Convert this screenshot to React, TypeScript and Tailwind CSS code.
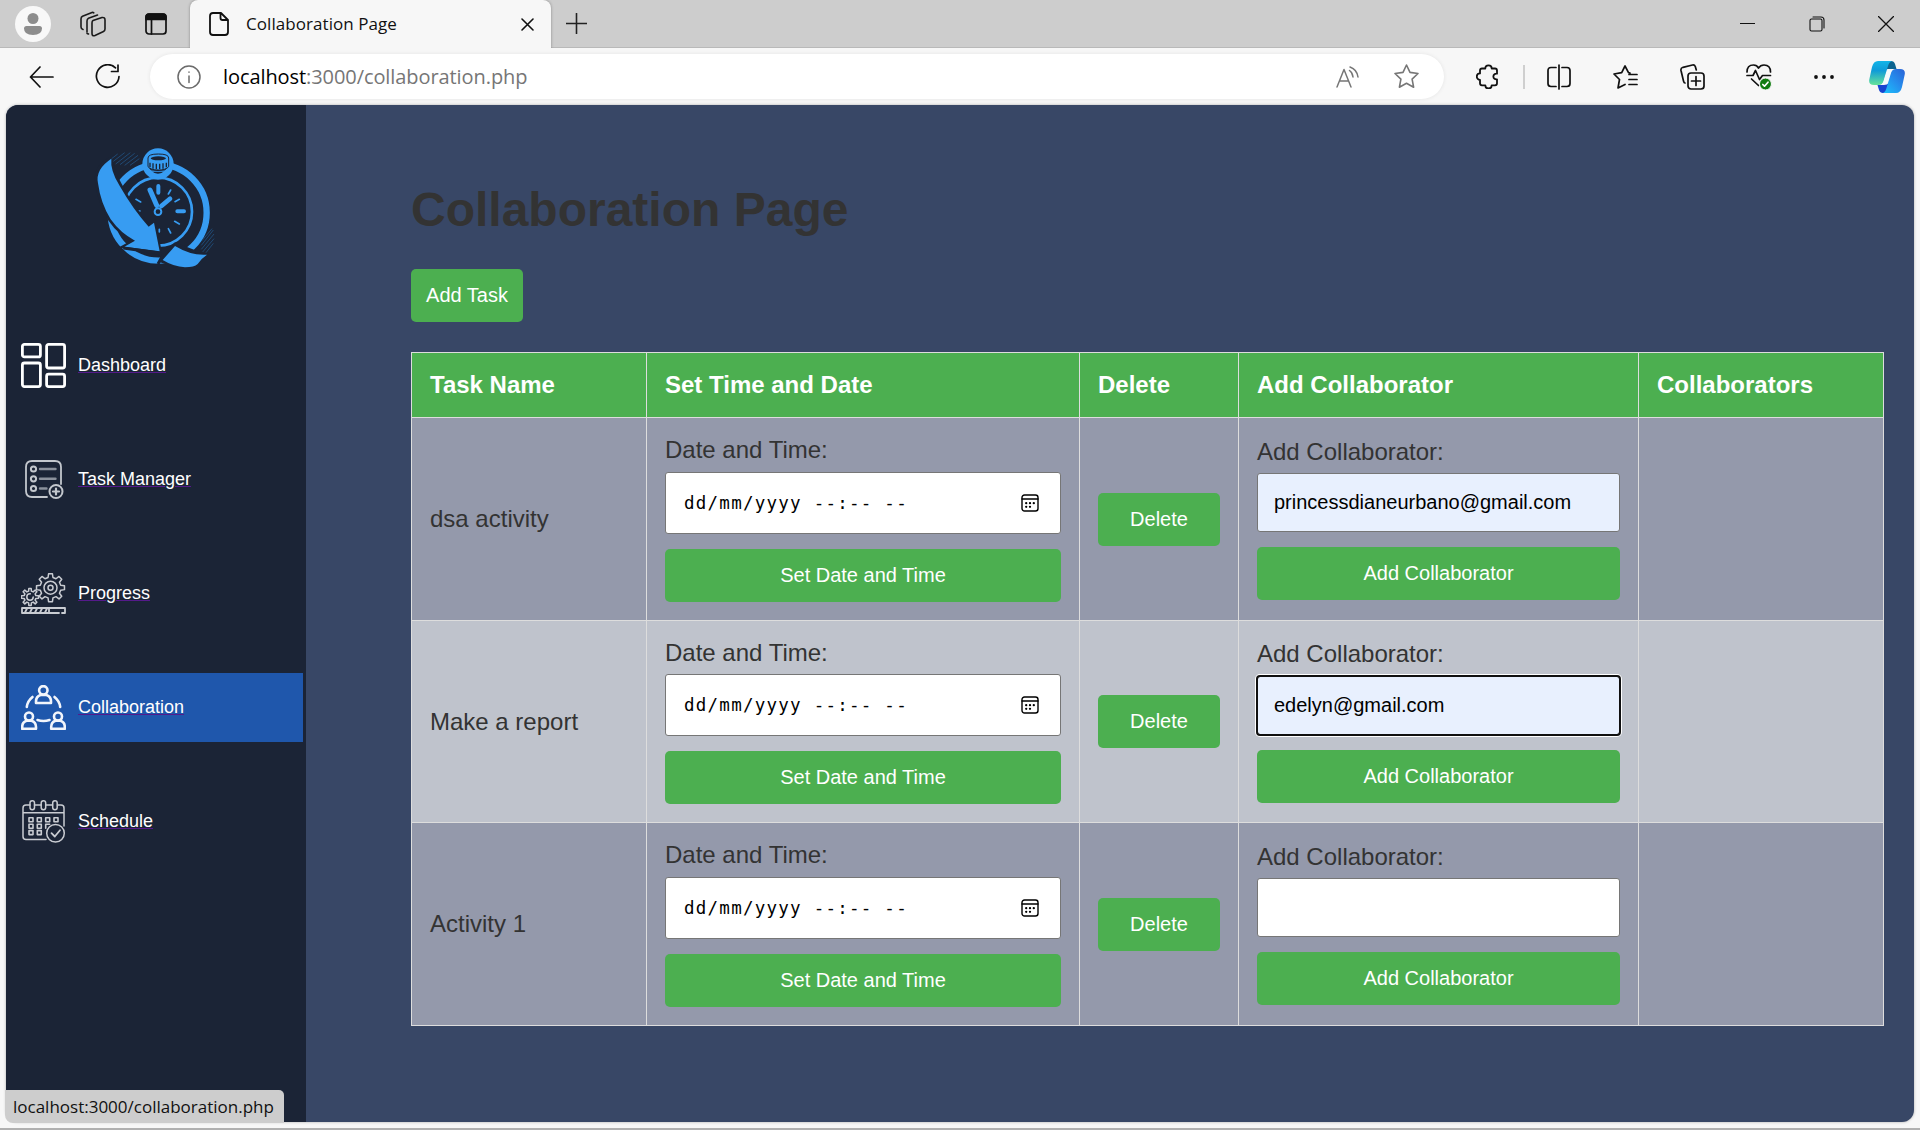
import React from "react";

const ui = "font-['Open_Sans','Noto_Sans',sans-serif]";

function Svg({ w, h, vb, cls = "", sw = 1.5, children }: { w: number; h: number; vb?: string; cls?: string; sw?: number; children: React.ReactNode }) {
  return (
    <svg width={w} height={h} viewBox={vb ?? `0 0 ${w} ${h}`} className={`block shrink-0 ${cls}`} fill="none" stroke="currentColor" strokeWidth={sw} strokeLinecap="round" strokeLinejoin="round">
      {children}
    </svg>
  );
}

function TabStrip() {
  return (
    <div className="flex h-12 items-stretch bg-[#cdcdcd]">
      <div className="flex w-[190px] items-center border-b border-[#b9b9b9] pl-[15px]">
        <div className="flex size-9 items-center justify-center rounded-full bg-[#f8f8f8]">
          <Svg w={18} h={22} sw={0}>
            <circle cx="9" cy="5.5" r="5.5" fill="#8d8d8d" />
            <path d="M0 15.5Q0 13 2.5 13h13q2.500 0 2.500 2.500Q18 22 9 22T0 15.500Z" fill="#8d8d8d" />
          </Svg>
        </div>
        <Svg w={26} h={26} cls="ml-[29px] text-[#1b1b1b]" sw={1.6}>
          <path d="M13 9.500 22 6.500Q25 6 25 9v9q0 1.800-1.500 2.500L15 24.500Q12 25.500 12 22.500V12q0-2 1-2.500ZM7 21V10q0-2 1.500-2.800L17.500 4M3 18.500Q1 18 1 16V8q0-2 1.500-2.700L12 1.500q1-.3 1.800.3M7 22q-.2.500 1.500 1" />
        </Svg>
        <Svg w={22} h={22} cls="ml-[39px] text-[#111]" sw={1.7}>
          <rect x="1" y="1" width="20" height="20" rx="3" />
          <path d="M1 6.500V4q0-3 3-3h14q3 0 3 3v2.500Z" fill="currentColor" />
          <path d="M6.500 7v14" />
        </Svg>
      </div>
      <div className="flex w-[361px] items-center rounded-t-lg bg-[#f7f7f7] pl-[19px] shadow-[0_0_3px_rgba(0,0,0,.35)] [clip-path:inset(0_-4px_0_-4px)]">
        <Svg w={20} h={24} cls="text-[#111]" sw={1.8}>
          <path d="M4 1h8l7 7v12q0 3-3 3H4q-3 0-3-3V4q0-3 3-3ZM11.500 1v5q0 2 2 2H19" />
        </Svg>
        <span className={`${ui} ml-[17px] w-[153px] text-[17px] leading-6 tracking-[0.060px] whitespace-nowrap text-[#111]`}>Collaboration Page</span>
        <Svg w={13} h={13} cls="ml-[122px] text-[#111]" sw={1.6}>
          <path d="M1 1l11 11M12 1 1 12" />
        </Svg>
      </div>
      <div className="flex flex-1 items-center border-b border-[#b9b9b9] pl-[15px] text-[#222]">
        <Svg w={21} h={21} sw={1.6}><path d="M10.500 .5v20M.5 10.500h20" /></Svg>
        <div className="ml-auto flex items-center pr-[26px] text-[#111]">
          <Svg w={15} h={15} sw={1.2}><path d="M0 7.500h15" /></Svg>
          <Svg w={16} h={16} cls="ml-[54px]" sw={1.1}>
            <rect x="1" y="3" width="12" height="12" rx="1.500" />
            <path d="M4 1h8q3 0 3 3v8" />
          </Svg>
          <Svg w={16} h={16} cls="ml-[53px]" sw={1.3}><path d="M.5.5l15 15M15.500.5l-15 15" /></Svg>
        </div>
      </div>
    </div>
  );
}

function CopilotLogo() {
  return (
    <svg width="36" height="32" viewBox="0 0 36 32" className="block shrink-0">
      <defs>
        <linearGradient id="ca" x1="0" y1="0" x2="0" y2="1"><stop offset="0" stopColor="#12b5e8" /><stop offset=".4" stopColor="#0f9bd8" /><stop offset="1" stopColor="#66e39a" /></linearGradient>
        <linearGradient id="cb" x1="1" y1="0" x2="0" y2="1"><stop offset="0" stopColor="#2a62d6" /><stop offset=".5" stopColor="#2590ee" /><stop offset="1" stopColor="#1cc3fb" /></linearGradient>
      </defs>
      <path d="M17 0h5q3 0 4 3l1.500 5H19q-3 0-4 2Z" fill="#0c6490" />
      <path d="M19 32h-5q-3 0-4-3l-1.500-5H15q3 0 5-2Z" fill="#1744d0" />
      <path d="M9 0h14q-3 1-4 5l-4.500 15q-1.200 4-5 4H5q-6 0-4.600-6L3 6q1.500-6 6-6Z" fill="url(#ca)" />
      <path d="M27 32H14q2.500-1 3.500-5L22 12q1.200-4 5-4h4q6 0 4.600 6L33 26q-1.500 6-6 6Z" fill="url(#cb)" />
      <path d="M19.500 9.500H23q-1 .8-1.500 2.500L18.700 21q-.7 2-3 2h-2.500q1-1 1.500-2.500l2.800-9q.6-2 2-2Z" fill="#f4fafc" />
    </svg>
  );
}

function Toolbar() {
  return (
    <div className="flex h-[57px] items-center bg-[#f7f7f7] pl-[29px] text-[#111]">
      <Svg w={25} h={22} sw={1.7}><path d="M24 11H1.500M11 1 1.500 11 11 21" /></Svg>
      <Svg w={25} h={25} cls="ml-[41px]" sw={1.7}><path d="M20.500 3.800A11.300 11.300 0 1 0 24 12.500M23 1v6.500h-6.500" /></Svg>
      <div className="ml-[30px] flex h-[45px] w-[1294px] items-center rounded-full bg-white pl-[27px] shadow-[0_0_4px_rgba(0,0,0,.08)]">
        <Svg w={24} h={24} cls="text-[#6b6b6b]" sw={1.5}>
          <circle cx="12" cy="12" r="11" />
          <path d="M12 11v6.500M12 7v.3" />
        </Svg>
        <span className={`${ui} ml-[22px] text-[20px] leading-7 tracking-[-0.080px] whitespace-nowrap text-[#767676]`}>
          <span className="text-black">localhost</span>:3000/collaboration.php
        </span>
        <div className="ml-auto flex items-center pr-[25px] text-[#767676]">
          <Svg w={23} h={22} sw={1.5}>
            <path d="M1 21 8 3.500 15 21M3.500 15h9M13.500 4.500q3 2 3.500 6.500M14 1q7 2.500 8 10" />
          </Svg>
          <Svg w={25} h={25} cls="ml-[35px]" sw={1.6}>
            <path d="m12.500 1 3.500 7.400 8 1.100-5.900 5.600 1.500 8.100-7.100-3.900-7.100 3.900 1.500-8.100L1 9.500l8-1.100Z" />
          </Svg>
        </div>
      </div>
      <Svg w={23} h={25} cls="ml-[32px]" sw={1.8}>
        <path d="M6 4.500h3.300a3.200 3.200 0 0 1 6.400 0H19q2 0 2 2v3.200a2.900 2.900 0 1 0 0 5.600v4q0 2-2 2h-3.300a3.200 3.200 0 0 1-6.400 0H6q-2 0-2-2v-3.500a3.200 3.200 0 0 1 0-6.400V6.500q0-2 2-2Z" />
      </Svg>
      <div className="ml-[24px] h-6 w-0.5 bg-[#cfcfcf]" />
      <Svg w={24} h={26} cls="ml-[22px]" sw={1.7}>
        <path d="M12 1v24M9 3.500H4q-3 0-3 3v13q0 3 3 3h5M15 3.500h5q3 0 3 3v13q0 3-3 3h-5" />
      </Svg>
      <Svg w={25} h={24} cls="ml-[42px]" sw={1.7}>
        <path d="M17 8l-1.500-.3L12 1 8.700 7.700 1 9l5.500 5.500L5 23l7-3.500M16 9.500h8M16 14.500h8M16 19.500h8" />
      </Svg>
      <Svg w={25} h={26} cls="ml-[42px]" sw={1.7}>
        <rect x="8" y="9" width="16" height="16" rx="3" />
        <path d="M16 12.500v9M11.500 17h9M5 19q-1 0-1.500-2L1 6.500Q.5 4 3 3.300L12.500 1q2-.4 2.800 1.500l1 3.500" />
      </Svg>
      <Svg w={27} h={28} cls="ml-[41px]" sw={1.7}>
        <path d="M1 9q0-7 6.500-7 3.500 0 5 3Q14.500 2 18 2q6.500 0 6.500 7M1 12.500h6l2.500-5 4 9 3-4h8M5.500 16l7 6.500" />
        <circle cx="19.500" cy="21" r="6" fill="#107c10" stroke="#f7f7f7" strokeWidth="1" />
        <path d="m16.800 21.500 1.700 1.700 3.500-4" stroke="#fff" />
      </Svg>
      <Svg w={20} h={4} cls="ml-[41px]" sw={0}>
        <circle cx="2" cy="2" r="1.900" fill="currentColor" /><circle cx="10" cy="2" r="1.900" fill="currentColor" /><circle cx="18" cy="2" r="1.900" fill="currentColor" />
      </Svg>
      <div className="ml-[35px]"><CopilotLogo /></div>
    </div>
  );
}

function ClockLogo() {
  return (
    <svg width="150" height="150" viewBox="0 0 450 450" className="block" fill="none" stroke="#379cf2">
      <circle cx="236" cy="248" r="144" strokeWidth="19" />
      <circle cx="234" cy="245" r="102" strokeWidth="8" />
      <circle cx="234" cy="102" r="38" fill="#1b2436" strokeWidth="18" />
      <path d="M196 117q38 12 76 0v8h-76Z" fill="#379cf2" stroke="none" />
      <path d="M204 84q0-12 31-12t31 12v26q-8 10-31 10t-31-10Z" fill="#379cf2" stroke="#1b2436" strokeWidth="3" />
      <ellipse cx="235" cy="85" rx="23" ry="6" fill="#1b2436" stroke="none" />
      <path d="M210 98v14M219 100v16M229 101v16M239 101v16M249 100v16M259 98v14" stroke="#1b2436" strokeWidth="4" />
      <g strokeLinecap="round">
        <path d="M235 168v20M292 244h20" strokeWidth="12" />
        <path d="M272 180l-7 12M298 208l-13 7M284 274l14 8M265 296l7 13M238 298v8M168 208l14 8M174 243h6" strokeWidth="5" />
        <path d="M230 226 210 180" strokeWidth="15" />
        <path d="M244 228 270 206" strokeWidth="14" />
      </g>
      <circle cx="234" cy="245" r="10" fill="#1b2436" strokeWidth="6" />
      <path d="M94 86Q42 110 52 165 60 220 90 268 120 312 165 332l-32 18 106 14-17-86-16 12Q145 215 120 165 94 120 94 86Z" stroke="#1b2436" strokeWidth="12" fill="#1b2436" />
      <path d="M94 86Q45 118 54 160 62 220 92 268 122 310 165 332l-32 18 106 14-17-86-16 12Q160 240 118 166 90 120 94 86Z" fill="#379cf2" stroke="none" />
      <path d="M130 354 236 369 244 376M234 402l10-18 42-42 60 24" stroke="#1b2436" strokeWidth="9" />
      <path d="M236 395 285 342l60 26 44 2-40 44H290Z" fill="#1b2436" stroke="none" />
      <path d="M248 390 285 348q50 30 96 26-18 12-28 28-10 10-38 10-34-2-67-22Z" fill="#379cf2" stroke="none" />
      <path d="M95 86l18-14M100 94l34-26M107 102l44-34M120 104l44-34M134 106l40-30M150 106l28-20M366 332l30-36M364 346l36-46M364 358l38-46M368 366l34-40M378 368l22-28" stroke="#21507f" strokeWidth="2.500" />
    </svg>
  );
}

function DashboardIcon() {
  return (
    <Svg w={45} h={45} cls="text-white" sw={2.800}>
      <rect x="1.400" y="1.400" width="18" height="12.500" rx="2" /><rect x="1.400" y="20" width="18" height="23.600" rx="2" />
      <rect x="25.600" y="1.400" width="18" height="23.600" rx="2" /><rect x="25.600" y="31.200" width="18" height="12.400" rx="2" />
    </Svg>
  );
}

function TaskIcon() {
  return (
    <Svg w={45} h={45} cls="text-[#c3c7cd]" sw={1.8}>
      <path d="M26 40H11q-6 0-6-6V10q0-6 6-6h23q6 0 6 6v17" />
      <g strokeWidth="2"><circle cx="12.500" cy="12" r="2.600" /><circle cx="12.500" cy="21.800" r="2.600" /><circle cx="12.500" cy="31.500" r="2.600" /></g>
      <path d="M19 12h15.500M19 21.800h15.500M19 31.500h6.500" stroke="#8b919c" strokeWidth="2.400" />
      <circle cx="35" cy="34.500" r="6.500" strokeWidth="2" /><path d="M35 31.500v6M32 34.500h6" strokeWidth="2.200" />
    </Svg>
  );
}

function gearPath(cx: number, cy: number, r: number, d: number, n: number, turn: number) {
  const pts: string[] = [];
  for (let i = 0; i < n; i++) {
    const base = turn + (i * 2 * Math.PI) / n;
    const step = Math.PI / n;
    ([[-0.6, r], [-0.35, r + d], [0.35, r + d], [0.6, r]] as const).forEach(([k, q]) => {
      pts.push(`${(cx + q * Math.sin(base + k * step)).toFixed(2)} ${(cy - q * Math.cos(base + k * step)).toFixed(2)}`);
    });
  }
  return `M${pts.join("L")}Z`;
}

function ProgressIcon() {
  return (
    <Svg w={45} h={45} cls="text-[#c9ccd2]" sw={1.5}>
      <path d={gearPath(29.500, 16.700, 10.500, 3.600, 8, 0)} />
      <circle cx="29.500" cy="16.700" r="6.500" /><circle cx="29.500" cy="16.700" r="2.500" />
      <path d={gearPath(9, 26, 6, 2.600, 8, 0)} /><circle cx="9" cy="26" r="3.200" strokeDasharray="15 5" />
      <path d="M38 42H1v-5h43v5h-3" strokeWidth="1.800" />
      <path d="M4 41.500l2-4M9 41.500l2-4M14 41.500l2-4M19 41.500l2-4M24 41.500l2-4M28 41.500v-4" strokeWidth="1.800" />
    </Svg>
  );
}

function TeamIcon() {
  return (
    <Svg w={45} h={45} cls="text-[#f2f5fb]" sw={2.600}>
      <circle cx="22.300" cy="5.300" r="4.200" /><path d="M15 18v-1.500q0-5 4.500-6.500h6q4.500 1.500 4.500 6.500V18Z" />
      <circle cx="8" cy="31.500" r="4" /><path d="M1.200 43.800V42q0-5 4.300-6.300h5Q15 37 15 42v1.800Z" />
      <circle cx="37" cy="31.500" r="4" /><path d="M30.200 43.800V42q0-5 4.300-6.300h5q4.300 1.300 4.300 6.300v1.800Z" />
      <path d="M11.500 12Q6.500 16 5.800 22M33.500 12q5 4 5.700 10M16.500 35q6 2 12 0" />
    </Svg>
  );
}

function CalendarIcon() {
  return (
    <Svg w={45} h={45} cls="text-[#c9ccd2]" sw={1.500}>
      <path d="M25 40.500H5q-3 0-3-3V9q0-3 3-3h4M13.500 6h6.500M25 6h6.500M36.500 6H40q3 0 3 3v18M2 13.800h41" />
      <rect x="9" y="1.800" width="4.500" height="9" rx="2.200" /><rect x="20.200" y="1.800" width="4.500" height="9" rx="2.200" /><rect x="31.700" y="1.800" width="4.500" height="9" rx="2.200" />
      <g strokeWidth="1.600">
        <path d="M8 18.800h4v4H8ZM16.300 18.800h4v4h-4ZM24.700 18.800h4v4h-4ZM33 18.800h4v4h-4ZM8 25.300h4v4H8ZM16.300 25.300h4v4h-4ZM28.700 25.300h-4v4M8 31.600h4v4H8ZM16.300 31.600h4v4h-4Z" />
      </g>
      <circle cx="34.500" cy="34.200" r="8.800" /><path d="m30.500 34.200 3.300 3.300 5.200-6.300" strokeWidth="1.800" />
    </Svg>
  );
}

const nav = [
  { label: "Dashboard", icon: <DashboardIcon /> },
  { label: "Task Manager", icon: <TaskIcon /> },
  { label: "Progress", icon: <ProgressIcon /> },
  { label: "Collaboration", icon: <TeamIcon />, active: true },
  { label: "Schedule", icon: <CalendarIcon /> },
];

function Sidebar() {
  return (
    <aside className="w-[300px] shrink-0 bg-[#1b2436] px-[3px] pt-[25px]">
      <div className="ml-[71px]"><ClockLogo /></div>
      <nav className="mt-[51px] flex flex-col gap-[45px]">
        {nav.map((n) => (
          <a key={n.label} className={`flex h-[69px] items-center pl-3 ${n.active ? "bg-[#1f57ac]" : ""}`}>
            {n.icon}
            <span className="ml-3 text-[18px] leading-[21px] text-white underline decoration-[#551a8b] decoration-1 underline-offset-1">{n.label}</span>
          </a>
        ))}
      </nav>
    </aside>
  );
}

function GreenButton({ children, cls = "" }: { children: React.ReactNode; cls?: string }) {
  return <button className={`block h-[53px] rounded-[5px] bg-[#4caf50] text-[20px] leading-[23px] text-white ${cls}`}>{children}</button>;
}

function DateField() {
  return (
    <div className="flex h-[62px] items-center rounded-[3px] border border-[#767676] bg-white pr-[21px] pl-[18px] text-black">
      <span className="font-['DejaVu_Sans_Mono',monospace] text-[17.500px] leading-6 tracking-[1.250px] whitespace-pre">dd/mm/yyyy --:-- --</span>
      <Svg w={18} h={18} cls="ml-auto" sw={1.400}>
        <rect x="1" y="1" width="16" height="16" rx="2.500" />
        <path d="M1 5h16" />
        <path d="M5.200 9.200h.01M9 9.200h.01M12.800 9.200h.01M5.200 12.800h.01M9 12.800h.01" strokeWidth="2.300" />
      </Svg>
    </div>
  );
}

const rows = [
  { name: "dsa activity", email: "princessdianeurbano@gmail.com", bg: "bg-[#9499ab]", h: "h-[203px]", date: "mb-2", add: "pt-5", gap: "mb-[7px]", field: "bg-[#e8f0fe] border border-[#767676] pb-px" },
  { name: "Make a report", email: "edelyn@gmail.com", bg: "bg-[#bfc3cc]", h: "h-[202px]", date: "mb-[7px]", add: "pt-[19px]", gap: "mb-2", field: "bg-[#e8f0fe] border border-[#767676] pb-px outline-2 outline-[#101010] -outline-offset-1 shadow-[0_0_0_2px_#fff]" },
  { name: "Activity 1", email: "", bg: "bg-[#9499ab]", h: "h-[203px]", date: "mb-2", add: "pt-5", gap: "mb-[7px]", field: "bg-white border border-[#767676]" },
];

const cols = "grid grid-cols-[235px_433px_159px_400px_245px]";
const cell = "border-r border-b border-[#ddd] pl-[18px]";

function TaskTable() {
  return (
    <div className="w-[1473px] border-t border-l border-[#ddd] text-[24px] leading-7 text-[#333]">
      <div className={`${cols} h-[65px] bg-[#4caf50] font-bold text-white`}>
        {["Task Name", "Set Time and Date", "Delete", "Add Collaborator", "Collaborators"].map((t) => (
          <div key={t} className={`${cell} flex items-center`}>{t}</div>
        ))}
      </div>
      {rows.map((r) => (
        <div key={r.name} className={`${cols} ${r.h} ${r.bg}`}>
          <div className={`${cell} flex items-center`}>{r.name}</div>
          <div className={`${cell} pt-[18px] pr-[18px]`}>
            <div className={r.date}>Date and Time:</div>
            <DateField />
            <GreenButton cls="mt-[15px] w-full">Set Date and Time</GreenButton>
          </div>
          <div className={`${cell} flex items-center`}>
            <GreenButton cls="w-[122px]">Delete</GreenButton>
          </div>
          <div className={`${cell} ${r.add} pr-[18px]`}>
            <div className={r.gap}>Add Collaborator:</div>
            <div className={`flex h-[59px] items-center rounded-[3px] pl-[16px] text-[20px] leading-6 text-black ${r.field}`}>{r.email}</div>
            <GreenButton cls="mt-[15px] w-full">Add Collaborator</GreenButton>
          </div>
          <div className={cell} />
        </div>
      ))}
    </div>
  );
}

export default function App() {
  return (
    <div className="flex h-[1130px] w-[1920px] flex-col overflow-hidden border-b-2 border-[#b0b0b0] bg-[#f7f7f7]">
      <TabStrip />
      <Toolbar />
      <div className="relative mx-[6px] flex h-[1017px] font-['Liberation_Sans',Arial,sans-serif]">
        <div className="flex flex-1 overflow-hidden rounded-[12px] bg-[#384766] shadow-[0_0_3px_rgba(0,0,0,.3)]">
          <Sidebar />
          <main className="pt-[77px] pl-[105px]">
            <h1 className="text-[48px] leading-[56px] font-bold text-[#333]">Collaboration Page</h1>
            <GreenButton cls="mt-[31px] mb-[30px] w-[112px]">Add Task</GreenButton>
            <TaskTable />
          </main>
        </div>
        <div className={`${ui} absolute bottom-[-1px] left-[-1px] flex h-[33px] w-[279px] items-center rounded-tr-[5px] rounded-bl-[8px] bg-[#cdcdcd] pl-[8px] text-[17px] whitespace-nowrap text-[#111]`}>
          localhost:3000/collaboration.php
        </div>
      </div>
    </div>
  );
}
